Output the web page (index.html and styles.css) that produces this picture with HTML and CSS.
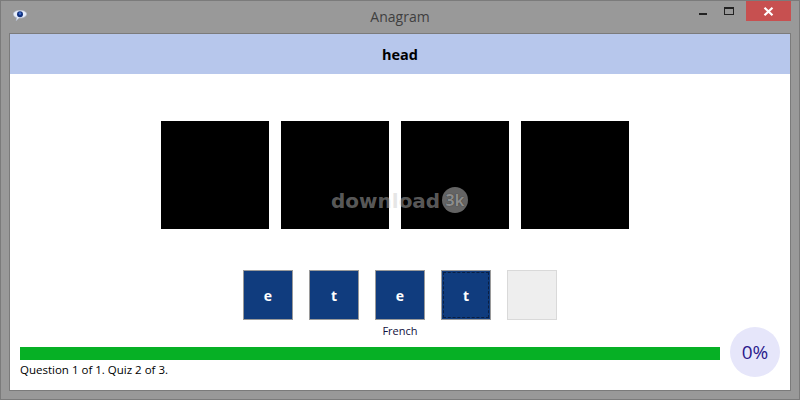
FILE: index.html
```html
<!DOCTYPE html>
<html lang="en">
<head>
    <meta charset="UTF-8">
    <title>Anagram</title>
    <link rel="stylesheet" href="styles.css">
</head>
<body>
    <div class="window">
        <div class="titlebar">
            <svg class="app-icon" width="16" height="16" viewBox="0 0 16 16">
                <path d="M8 2.500c4 0 6.500 1.400 6.500 3.600 0 2.300-2.800 3.900-6.300 3.900H7L4.200 12.600 4.900 9.700C2.800 9.200 1.500 7.900 1.500 6.100 1.500 3.900 4 2.500 8 2.500z" fill="#e8eefa" stroke="#b9c4dc" stroke-width=".6"/>
                <circle cx="8" cy="6.200" r="3" fill="#10307c"/>
                <circle cx="8" cy="5.600" r="1.300" fill="#3f6fd0"/>
            </svg>
            <div class="title">Anagram</div>
            <div class="controls">
                <div class="ctl"><span class="min-glyph"></span></div>
                <div class="ctl"><span class="max-glyph"></span></div>
                <div class="ctl close">
                    <svg width="11" height="9" viewBox="0 0 11 9"><path d="M1.500 .8 9.500 8.200M9.500 .8 1.500 8.200" stroke="#fff" stroke-width="2.200" fill="none"/></svg>
                </div>
            </div>
        </div>
        <div class="content">
            <div class="word-bar">head</div>
            <div class="pictures">
                <div class="picture"></div>
                <div class="picture"></div>
                <div class="picture"></div>
                <div class="picture"></div>
            </div>
            <div class="tiles">
                <div class="tile">e</div>
                <div class="tile">t</div>
                <div class="tile">e</div>
                <div class="tile focused">t</div>
                <div class="tile empty"></div>
            </div>
            <div class="bottom">
                <div class="language">French</div>
                <div class="progress"></div>
                <div class="status">Question 1 of 1. Quiz 2 of 3.</div>
                <div class="score">0%</div>
            </div>
            <div class="watermark"><span class="wm-text">download</span><span class="wm-badge">3k</span></div>
        </div>
    </div>
</body>
</html>
```

FILE: styles.css
```css
html, body {
    margin: 0;
    padding: 0;
}
body {
    font-family: "Open Sans", "Noto Sans", sans-serif;
    width: 800px;
    height: 400px;
    overflow: hidden;
}
.window {
    box-sizing: border-box;
    width: 800px;
    height: 400px;
    background-color: #999999;
    border: 1px solid #7b7b7b;
    padding: 0 8px 8px 8px;
    display: flex;
    flex-direction: column;
}
.titlebar {
    height: 32px;
    display: flex;
    align-items: center;
    position: relative;
    flex: none;
}
.app-icon {
    margin: -2px 0 0 3px;
}
.title {
    position: absolute;
    left: 0;
    right: 0;
    top: 6px;
    text-align: center;
    font-size: 14px;
    line-height: 20px;
    color: #3f3f3f;
}
.controls {
    margin-left: auto;
    align-self: flex-start;
    display: flex;
}
.ctl {
    width: 26px;
    height: 20px;
    display: flex;
    align-items: center;
    justify-content: center;
}
.min-glyph {
    display: block;
    width: 8px;
    height: 2px;
    margin-top: 6px;
    background-color: #222;
}
.max-glyph {
    display: block;
    box-sizing: border-box;
    width: 10px;
    height: 8px;
    border: 1px solid #222;
    border-top-width: 2px;
}
.ctl.close {
    width: 45px;
    margin-left: 4px;
    background-color: #c75050;
}
.content {
    flex: 1;
    background-color: #fff;
    border: 1px solid #7b7b7b;
    display: flex;
    flex-direction: column;
    position: relative;
    color: #000;
}
.word-bar {
    height: 40px;
    background-color: #b7c7ec;
    text-align: center;
    line-height: 41px;
    font-size: 14.5px;
    font-weight: 700;
}
.pictures {
    display: flex;
    justify-content: center;
    gap: 12px;
    margin: 47px 10px 0 0;
}
.picture {
    width: 108px;
    height: 108px;
    background-color: #000;
}
.tiles {
    display: flex;
    justify-content: center;
    gap: 16px;
    margin-top: 41px;
}
.tile {
    box-sizing: border-box;
    width: 50px;
    height: 50px;
    background-color: #103c7e;
    border: 1px solid #9a9a9a;
    color: #fff;
    font-size: 14px;
    font-weight: 700;
    display: flex;
    align-items: center;
    justify-content: center;
    position: relative;
}
.tile.focused::after {
    content: "";
    position: absolute;
    inset: 1px;
    border: 1px dashed #0a1f42;
}
.tile.empty {
    background-color: #eeeeee;
    border-color: #d9d9d9;
}
.bottom {
    display: grid;
    grid-template-columns: 1fr 50px;
    grid-template-rows: 23px 13px auto;
    column-gap: 10px;
    margin: 4px 10px 0 10px;
}
.language {
    grid-column: 1 / 3;
    grid-row: 1;
    text-align: center;
    font-size: 11px;
    line-height: 14px;
    color: #101040;
}
.progress {
    grid-column: 1;
    grid-row: 2;
    background-color: #06b025;
}
.status {
    grid-column: 1;
    grid-row: 3;
    font-size: 11.5px;
    line-height: 20px;
}
.score {
    grid-column: 2;
    grid-row: 1 / 4;
    width: 50px;
    height: 50px;
    margin-top: 3px;
    border-radius: 50%;
    background-color: #e6e6fa;
    color: #2b1a8c;
    font-size: 19px;
    line-height: 50px;
    text-align: center;
}
.watermark {
    position: absolute;
    left: 321px;
    top: 153px;
    display: flex;
    align-items: center;
    color: rgba(200, 200, 200, .45);
}
.wm-text {
    width: 111px;
    font-family: "DejaVu Sans", sans-serif;
    font-size: 20px;
    font-weight: 700;
    line-height: 26px;
    position: relative;
    top: 1px;
}
.wm-badge {
    width: 26px;
    height: 26px;
    border-radius: 50%;
    background-color: #646464;
    color: #8c8c8c;
    font-size: 16px;
    font-weight: 700;
    line-height: 26px;
    text-align: center;
    text-shadow: 0 0 1px #222;
}
```
